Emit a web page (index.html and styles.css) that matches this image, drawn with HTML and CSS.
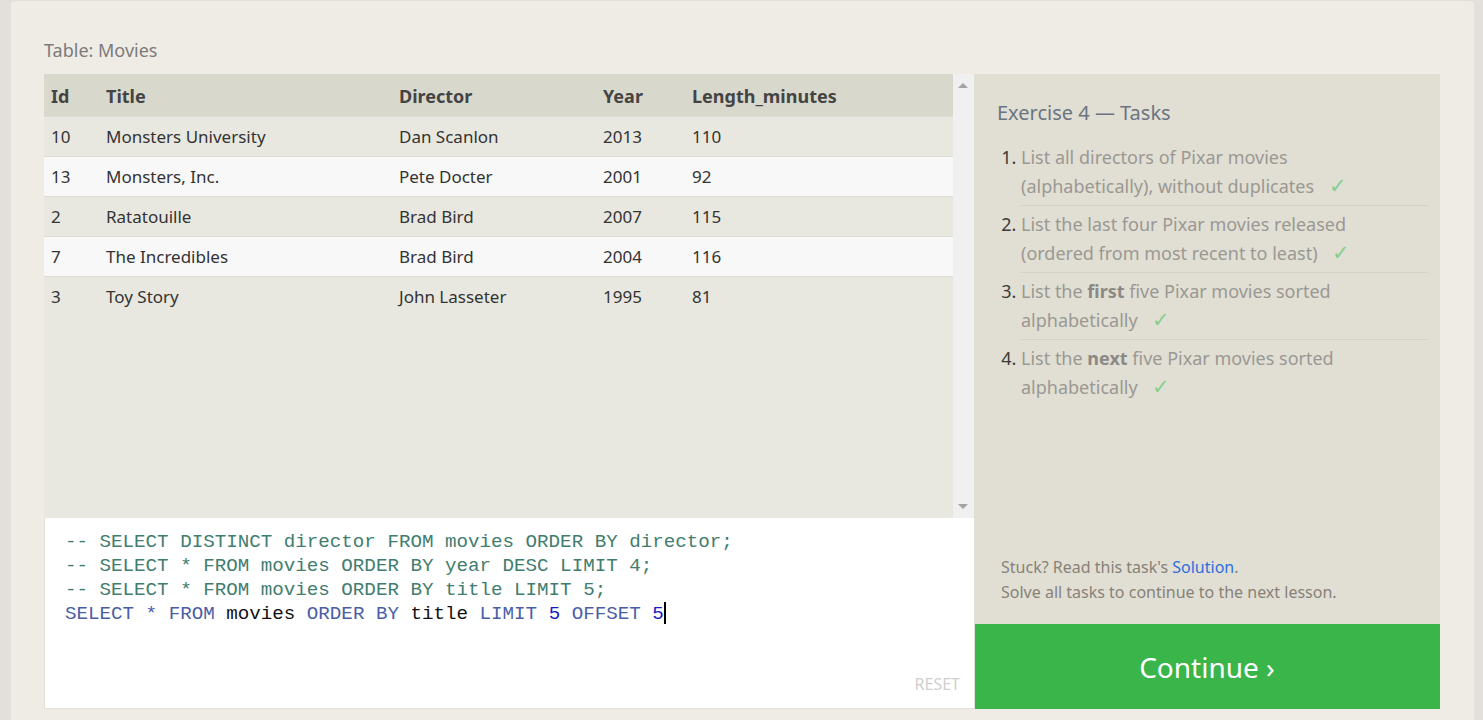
FILE: index.html
```html
<!DOCTYPE html>
<html>
<head>
<meta charset="utf-8">
<link rel="stylesheet" href="styles.css">
</head>
<body>
<div class="page">
  <div class="label">Table: Movies</div>
  <div class="exercise">
    <div class="left">
      <div class="table-wrap">
        <div class="table-area">
          <table class="movies">
            <thead>
              <tr><th class="c-id">Id</th><th class="c-title">Title</th><th class="c-dir">Director</th><th class="c-year">Year</th><th class="c-len">Length_minutes</th></tr>
            </thead>
            <tbody>
              <tr><td>10</td><td>Monsters University</td><td>Dan Scanlon</td><td>2013</td><td>110</td></tr>
              <tr><td>13</td><td>Monsters, Inc.</td><td>Pete Docter</td><td>2001</td><td>92</td></tr>
              <tr><td>2</td><td>Ratatouille</td><td>Brad Bird</td><td>2007</td><td>115</td></tr>
              <tr><td>7</td><td>The Incredibles</td><td>Brad Bird</td><td>2004</td><td>116</td></tr>
              <tr><td>3</td><td>Toy Story</td><td>John Lasseter</td><td>1995</td><td>81</td></tr>
            </tbody>
          </table>
        </div>
        <div class="scrollbar">
          <span class="arrow up"></span>
          <span class="arrow down"></span>
        </div>
      </div>
      <div class="editor">
        <div class="code">
          <div class="line cm">-- SELECT DISTINCT director FROM movies ORDER BY director;</div>
          <div class="line cm">-- SELECT * FROM movies ORDER BY year DESC LIMIT 4;</div>
          <div class="line cm">-- SELECT * FROM movies ORDER BY title LIMIT 5;</div>
          <div class="line"><span class="kw">SELECT</span> <span class="kw">*</span> <span class="kw">FROM</span> <span class="id">movies</span> <span class="kw">ORDER BY</span> <span class="id">title</span> <span class="kw">LIMIT</span> <span class="num">5</span> <span class="kw">OFFSET</span> <span class="num">5</span><span class="cursor"></span></div>
        </div>
        <div class="reset">RESET</div>
      </div>
    </div>
    <div class="tasks">
      <div class="tasks-body">
        <h2 class="tasks-title">Exercise 4 — Tasks</h2>
        <ol class="task-list">
          <li><span class="t">List all directors of Pixar movies (alphabetically), without duplicates <span class="check">✓</span></span></li>
          <li><span class="t">List the last four Pixar movies released (ordered from most recent to least) <span class="check">✓</span></span></li>
          <li><span class="t">List the <b>first</b> five Pixar movies sorted alphabetically <span class="check">✓</span></span></li>
          <li><span class="t">List the <b>next</b> five Pixar movies sorted alphabetically <span class="check">✓</span></span></li>
        </ol>
        <div class="stuck">
          <div>Stuck? Read this task's <a class="link">Solution</a>.</div>
          <div>Solve all tasks to continue to the next lesson.</div>
        </div>
      </div>
      <div class="continue">Continue ›</div>
    </div>
  </div>
</div>
</body>
</html>
```

FILE: styles.css
```css
html, body {
  margin: 0;
  padding: 0;
  background: #e3e0dc;
  height: 720px;
  overflow: hidden;
}

.page {
  margin: 1px 9px 0 11px;
  background: #efece5;
  border-radius: 4px 4px 0 0;
  padding: 37px 33px 0 33px;
  height: 682px;
  font-family: "Noto Sans", "Open Sans", sans-serif;
}

.label {
  font-size: 18px;
  line-height: 24px;
  color: #7b7b7b;
  margin-bottom: 12px;
}

.exercise {
  display: flex;
  width: 1396px;
  height: 635px;
}

.left {
  width: 930px;
  display: flex;
  flex-direction: column;
}

.table-wrap {
  display: flex;
  height: 444px;
}

.table-area {
  width: 909px;
  background: #e9e8e0;
}

.movies {
  width: 909px;
  border-collapse: collapse;
  table-layout: fixed;
  font-size: 17px;
  color: #333;
}

.movies th {
  background: #d9d8cc;
  color: #444;
  font-weight: 700;
  text-align: left;
  height: 42px;
  padding: 3px 0 0 7px;
  box-sizing: border-box;
  font-size: 18px;
}

.movies td {
  height: 39px;
  padding: 0 0 0 7px;
  border-top: 1px solid #dcdbd4;
}

.movies tbody tr:nth-child(odd) td { background: #e9e8e0; }
.movies tbody tr:nth-child(even) td { background: #f8f8f8; }

.c-id { width: 55px; }
.c-title { width: 293px; }
.c-dir { width: 204px; }
.c-year { width: 89px; }

.scrollbar {
  width: 21px;
  background: #f0f0f0;
  position: relative;
}

.arrow {
  position: absolute;
  left: 5px;
  width: 0;
  height: 0;
  border-left: 5px solid transparent;
  border-right: 5px solid transparent;
}
.arrow.up { top: 9px; border-bottom: 5px solid #a3a3a3; }
.arrow.down { bottom: 9px; border-top: 5px solid #a3a3a3; }

.editor {
  flex: 1;
  background: #fff;
  border: 1px solid #e3e2da;
  border-top: none;
  position: relative;
  width: 929px;
}

.code {
  padding: 12px 0 0 20px;
  font-family: "Liberation Mono", "DejaVu Sans Mono", monospace;
  font-size: 19.2px;
  line-height: 24px;
}

.line { white-space: pre; }
.cm { color: #3f7d6e; }
.kw { color: #4a5ea6; }
.id { color: #111; }
.num { color: #1919c0; }
.cursor {
  display: inline-block;
  width: 2px;
  height: 22px;
  background: #000;
  vertical-align: -5px;
}

.reset {
  position: absolute;
  right: 14px;
  bottom: 13px;
  font-size: 16px;
  color: #cfcfcf;
}

.tasks {
  width: 467px;
  background: #e1dfd4;
  display: flex;
  flex-direction: column;
}

.tasks-body {
  flex: 1;
  padding: 26px 12px 0 23px;
  display: flex;
  flex-direction: column;
}

.tasks-title {
  margin: 0;
  font-size: 20px;
  font-weight: 400;
  line-height: 26px;
  color: #6b7480;
}

.task-list {
  margin: 13px 0 0 0;
  padding: 0 0 0 24px;
  font-size: 18px;
  line-height: 29px;
  color: #3a3a3a;
}

.task-list li {
  padding: 4px 0 4px 0;
  border-bottom: 1px solid #d4d2c7;
}
.task-list li:last-child { border-bottom: none; }

.t {
  display: block;
  max-width: 360px;
  color: #9a9893;
}
.t b { color: #8b8984; }

.check {
  color: #84d08f;
  font-size: 21px;
  margin-left: 10px;
  line-height: 20px;
}

.stuck {
  margin-top: auto;
  padding: 0 0 19px 4px;
  font-size: 16px;
  line-height: 25px;
  color: #888178;
}

.link { color: #2d6fdc; }

.continue {
  height: 85px;
  background: #3ab54a;
  color: #fff;
  font-size: 28px;
  display: flex;
  align-items: center;
  justify-content: center;
}
```
